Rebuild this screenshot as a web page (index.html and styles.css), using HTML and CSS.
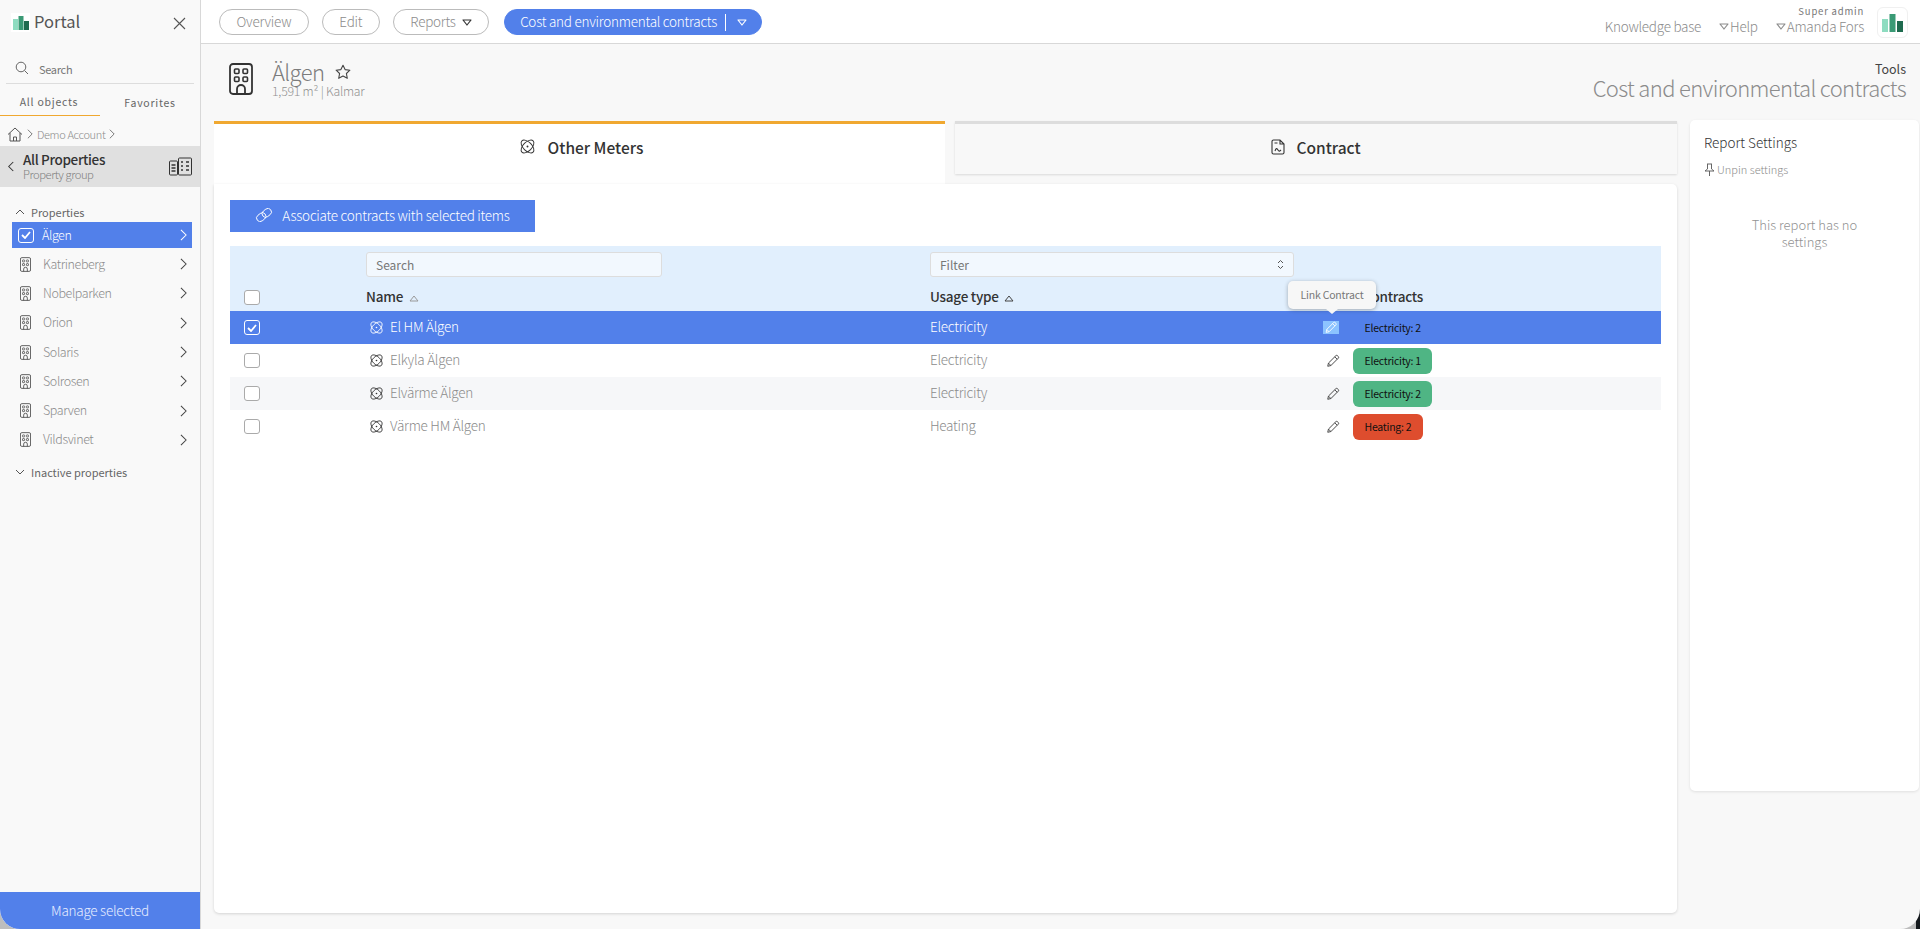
FILE: index.html
```html
<!DOCTYPE html>
<html>
<head>
	<title>Portal</title>
	<meta http-equiv="content-type" content="text/html; charset=utf-8" />
	<link rel="stylesheet" href="styles.css">
</head>
<body>
<svg class="defs" width="0" height="0">
	<symbol id="building" viewBox="0 0 24 32">
		<rect x="1" y="1" width="22" height="30" rx="3" fill="none" stroke="currentColor" stroke-width="1.8"/>
		<rect x="5.5" y="6" width="4.5" height="4.5" rx="1" fill="none" stroke="currentColor" stroke-width="1.6"/>
		<rect x="14" y="6" width="4.5" height="4.5" rx="1" fill="none" stroke="currentColor" stroke-width="1.6"/>
		<rect x="5.5" y="14" width="4.5" height="4.5" rx="1" fill="none" stroke="currentColor" stroke-width="1.6"/>
		<rect x="14" y="14" width="4.5" height="4.5" rx="1" fill="none" stroke="currentColor" stroke-width="1.6"/>
		<path d="M8 31v-5a4 4 0 0 1 8 0v5" fill="none" stroke="currentColor" stroke-width="1.8"/>
	</symbol>
	<symbol id="atom" viewBox="0 0 18 18">
		<g fill="none" stroke="currentColor" stroke-width="1">
			<ellipse cx="9" cy="9" rx="8.4" ry="4.600" transform="rotate(45 9 9)"/>
			<ellipse cx="9" cy="9" rx="8.4" ry="4.600" transform="rotate(-45 9 9)"/>
		</g>
		<circle cx="9" cy="9" r="1" fill="currentColor"/>
	</symbol>
	<symbol id="pencil" viewBox="0 0 16 16">
		<path d="M2 14l.8-3.6L11.2 2a1.4 1.4 0 0 1 2 0l.8.8a1.4 1.4 0 0 1 0 2L5.600 13.200z M10 3.200l2.800 2.800 M2.800 10.400l2.800 2.800" fill="none" stroke="currentColor" stroke-width="1.1"/>
	</symbol>
	<symbol id="chev-right" viewBox="0 0 8 14">
		<path d="M1 1l6 6-6 6" fill="none" stroke="currentColor" stroke-width="1.2"/>
	</symbol>
	<symbol id="tri" viewBox="0 0 10 7">
		<path d="M1 1h8L5 6z" fill="none" stroke="currentColor" stroke-width="1.2" stroke-linejoin="round"/>
	</symbol>
</svg>

<div class="app">
	<aside class="side">
		<div class="brand">
			<span class="brand-logo">
				<svg width="19" height="19" viewBox="0 0 19 19"><rect x="2" y="6" width="5" height="11" fill="#8edcc0"/><rect x="7.500" y="3" width="5" height="14" fill="#3a9a75"/><rect x="13" y="8" width="5" height="9" fill="#1f6b4f"/></svg>
			</span>
			<span class="brand-name">Portal</span>
			<svg class="brand-close" width="13" height="13" viewBox="0 0 13 13"><path d="M1 1l11 11M12 1L1 12" stroke="#555" stroke-width="1.1"/></svg>
		</div>
		<div class="side-search">
			<svg width="14" height="14" viewBox="0 0 14 14"><circle cx="6" cy="6" r="4.800" fill="none" stroke="#666" stroke-width="1"/><path d="M9.500 9.500l3.500 3.500" stroke="#666" stroke-width="1"/></svg>
			<span>Search</span>
		</div>
		<div class="side-tabs">
			<span class="side-tab side-tab-on">All objects</span>
			<span class="side-tab">Favorites</span>
		</div>
		<div class="crumb">
			<svg width="16" height="15" viewBox="0 0 16 15"><path d="M1 7.500L8 1l7 6.500M3 6v8h10V6M6.500 14v-4h3v4" fill="none" stroke="#555" stroke-width="1"/></svg>
			<svg class="crumb-sep" width="6" height="10"><use href="#chev-right"/></svg>
			<span>Demo Account</span>
			<svg class="crumb-sep" width="6" height="10"><use href="#chev-right"/></svg>
		</div>
		<div class="group">
			<svg class="group-back" width="6" height="11" viewBox="0 0 8 14"><path d="M7 1L1 7l6 6" fill="none" stroke="#333" stroke-width="1.400"/></svg>
			<div class="group-text">
				<div class="group-title">All Properties</div>
				<div class="group-sub">Property group</div>
			</div>
			<svg class="group-icon" width="23" height="19" viewBox="0 0 23 19">
				<g fill="none" stroke="#333" stroke-width="1">
					<rect x="0.500" y="4" width="8" height="14" rx="1"/>
					<rect x="9.500" y="1" width="13" height="17" rx="1"/>
					<path d="M12 5h2M17 5h3M12 9h2M17 9h3M12 13h2M17 13h3M2.500 8h4M2.500 11h4M2.500 14h4" stroke-width="1.600"/>
				</g>
			</svg>
		</div>
		<div class="sect"><svg width="10" height="6" viewBox="0 0 10 6"><path d="M1 5l4-4 4 4" fill="none" stroke="#555"/></svg>Properties</div>
		<div class="prop prop-on">
			<span class="check check-big check-on"><svg width="10" height="8" viewBox="0 0 10 8"><path d="M1 4l3 3 5-6" fill="none" stroke="#fff" stroke-width="1.800"/></svg></span>
			<span class="prop-name">Älgen</span>
			<svg class="prop-arrow" width="7" height="12"><use href="#chev-right"/></svg>
		</div>
		<div class="prop"><svg class="prop-icon" width="11" height="15"><use href="#building"/></svg><span class="prop-name">Katrineberg</span><svg class="prop-arrow" width="7" height="12"><use href="#chev-right"/></svg></div>
		<div class="prop"><svg class="prop-icon" width="11" height="15"><use href="#building"/></svg><span class="prop-name">Nobelparken</span><svg class="prop-arrow" width="7" height="12"><use href="#chev-right"/></svg></div>
		<div class="prop"><svg class="prop-icon" width="11" height="15"><use href="#building"/></svg><span class="prop-name">Orion</span><svg class="prop-arrow" width="7" height="12"><use href="#chev-right"/></svg></div>
		<div class="prop"><svg class="prop-icon" width="11" height="15"><use href="#building"/></svg><span class="prop-name">Solaris</span><svg class="prop-arrow" width="7" height="12"><use href="#chev-right"/></svg></div>
		<div class="prop"><svg class="prop-icon" width="11" height="15"><use href="#building"/></svg><span class="prop-name">Solrosen</span><svg class="prop-arrow" width="7" height="12"><use href="#chev-right"/></svg></div>
		<div class="prop"><svg class="prop-icon" width="11" height="15"><use href="#building"/></svg><span class="prop-name">Sparven</span><svg class="prop-arrow" width="7" height="12"><use href="#chev-right"/></svg></div>
		<div class="prop"><svg class="prop-icon" width="11" height="15"><use href="#building"/></svg><span class="prop-name">Vildsvinet</span><svg class="prop-arrow" width="7" height="12"><use href="#chev-right"/></svg></div>
		<div class="sect sect-low"><svg width="10" height="6" viewBox="0 0 10 6"><path d="M1 1l4 4 4-4" fill="none" stroke="#555"/></svg>Inactive properties</div>
		<div class="manage">Manage selected</div>
	</aside>

	<div class="main">
		<header class="top">
			<span class="pill">Overview</span>
			<span class="pill">Edit</span>
			<span class="pill">Reports <svg width="10" height="7"><use href="#tri"/></svg></span>
			<span class="pill pill-on">Cost and environmental contracts<i class="pill-sep"></i><svg width="10" height="7"><use href="#tri"/></svg></span>
			<div class="top-right">
				<a class="top-link">Knowledge base</a>
				<a class="top-link"><svg width="10" height="7"><use href="#tri"/></svg>Help</a>
				<div class="user">
					<div class="user-role">Super admin</div>
					<a class="top-link"><svg width="10" height="7"><use href="#tri"/></svg>Amanda Fors</a>
				</div>
				<span class="top-logo">
					<svg width="22" height="20" viewBox="0 0 22 20"><rect x="0" y="6" width="6" height="13" fill="#8edcc0"/><rect x="7.500" y="1" width="6" height="18" fill="#3a9a75"/><rect x="15" y="8" width="6" height="11" fill="#1f6b4f"/></svg>
				</span>
			</div>
		</header>

		<div class="head">
			<svg class="head-icon" width="24" height="32"><use href="#building"/></svg>
			<div class="head-text">
				<div class="head-title">Älgen
					<svg width="16" height="16" viewBox="0 0 16 16"><path d="M8 1.200l2.100 4.400 4.800.6-3.500 3.300.9 4.800L8 12l-4.300 2.300.9-4.800L1.100 6.200l4.800-.6z" fill="none" stroke="#444" stroke-width="1.100" stroke-linejoin="round"/></svg>
				</div>
				<div class="head-sub">1,591 m² | Kalmar</div>
			</div>
			<div class="head-right">
				<div class="head-tools">Tools</div>
				<div class="head-report">Cost and environmental contracts</div>
			</div>
		</div>

		<div class="body">
			<div class="left">
				<div class="tabs">
					<div class="tab tab-on"><svg width="17" height="17"><use href="#atom"/></svg>Other Meters</div>
					<div class="tab">
						<svg width="14" height="16" viewBox="0 0 14 16"><path d="M1 2.500A1.500 1.500 0 0 1 2.500 1H9l4 4v8.500a1.500 1.500 0 0 1-1.500 1.500h-9A1.500 1.500 0 0 1 1 13.500zM9 1v4h4M3.500 4h3M4 12c1-3 2-3 3-1s2 1 3 0" fill="none" stroke="#333" stroke-width="1.100"/></svg>
						Contract
					</div>
				</div>
				<div class="card">
					<button class="assoc">
						<svg width="18" height="14" viewBox="0 0 18 14"><g fill="none" stroke="#fff" stroke-width="0.900" transform="rotate(-38 9 7)"><rect x="0.500" y="3.500" width="10" height="7" rx="3.500"/><rect x="7.500" y="3.500" width="10" height="7" rx="3.500"/></g></svg>
						Associate contracts with selected items
					</button>
					<table class="grid">
						<colgroup>
							<col class="c-check"><col class="c-name"><col class="c-type"><col class="c-edit"><col>
						</colgroup>
						<thead>
							<tr class="filters">
								<th></th>
								<th><div class="field">Search</div></th>
								<th><div class="field">Filter
									<svg width="7" height="11" viewBox="0 0 7 11"><path d="M1 4l2.500-2.500L6 4M1 7l2.500 2.500L6 7" fill="none" stroke="#555"/></svg>
								</div></th>
								<th></th>
								<th></th>
							</tr>
							<tr class="labels">
								<th><span class="check"></span></th>
								<th>Name <svg class="sort" width="10" height="7" viewBox="0 0 10 7"><path d="M1 6h8L5 1z" fill="none" stroke="#999"/></svg></th>
								<th>Usage type <svg class="sort sort-dark" width="10" height="7" viewBox="0 0 10 7"><path d="M1 6h8L5 1z" fill="none" stroke="#444"/></svg></th>
								<th></th>
								<th class="th-contracts">Contracts</th>
							</tr>
						</thead>
						<tbody>
							<tr class="row-on">
								<td><span class="check check-on"><svg width="10" height="8" viewBox="0 0 10 8"><path d="M1 4l3 3 5-6" fill="none" stroke="#fff" stroke-width="1.800"/></svg></span></td>
								<td class="txt"><div class="meter"><svg width="15" height="15"><use href="#atom"/></svg>El HM Älgen</div></td>
								<td class="txt">Electricity</td>
								<td class="edit"><span class="edit-on">
									<svg width="14" height="14"><use href="#pencil"/></svg></span>
									<div class="tip">Link Contract</div>
								</td>
								<td><span class="badge badge-plain">Electricity: 2</span></td>
							</tr>
							<tr>
								<td><span class="check"></span></td>
								<td class="txt"><div class="meter"><svg width="15" height="15"><use href="#atom"/></svg>Elkyla Älgen</div></td>
								<td class="txt">Electricity</td>
								<td class="edit"><svg width="14" height="14"><use href="#pencil"/></svg></td>
								<td><span class="badge">Electricity: 1</span></td>
							</tr>
							<tr>
								<td><span class="check"></span></td>
								<td class="txt"><div class="meter"><svg width="15" height="15"><use href="#atom"/></svg>Elvärme Älgen</div></td>
								<td class="txt">Electricity</td>
								<td class="edit"><svg width="14" height="14"><use href="#pencil"/></svg></td>
								<td><span class="badge">Electricity: 2</span></td>
							</tr>
							<tr>
								<td><span class="check"></span></td>
								<td class="txt"><div class="meter"><svg width="15" height="15"><use href="#atom"/></svg>Värme HM Älgen</div></td>
								<td class="txt">Heating</td>
								<td class="edit"><svg width="14" height="14"><use href="#pencil"/></svg></td>
								<td><span class="badge badge-red">Heating: 2</span></td>
							</tr>
						</tbody>
					</table>
				</div>
			</div>
			<div class="settings">
				<div class="settings-title">Report Settings</div>
				<div class="settings-pin">
					<svg width="11" height="13" viewBox="0 0 11 13"><path d="M3 1h5M3.500 1v5L1 8h9L7.500 6V1M5.500 8v5" fill="none" stroke="#666" stroke-width="1"/></svg>
					Unpin settings
				</div>
				<div class="settings-empty">This report has no settings</div>
			</div>
		</div>
	</div>
</div>
</body>
</html>
```

FILE: styles.css
```css
html {
	height:100%;
	background:linear-gradient(to right, #bdbdbd 1916px, #14191d 1916px);
}

body {
	margin:0;
	height:100%;
	overflow:hidden;
	font-family:"Noto Sans CJK SC", "Noto Sans", sans-serif;
	font-size:14px;
	color:#333;
}

.defs {
	position:absolute;
}

svg {
	flex:none;
}

.app {
	display:flex;
	height:929px;
	background:#f8f8f8;
	border-radius:0 0 20px 20px;
	overflow:hidden;
}

/* sidebar */
.side {
	width:200px;
	flex:none;
	display:flex;
	flex-direction:column;
	background:#f9f9f9;
	border-right:1px solid #d8d8d8;
}

.brand {
	display:flex;
	align-items:center;
	height:44px;
	padding:0 14px 0 11px;
}

.brand-logo {
	width:19px;
	height:19px;
	background:#fff;
	margin-right:4px;
	margin-top:1px;
}

.brand-name {
	font-size:16.500px;
	font-weight:400;
	color:#555;
	flex:1;
	padding-bottom:2px;
}

.brand-close {
	margin-top:3px;
}

.side-search {
	display:flex;
	align-items:center;
	height:30px;
	margin:9px 6px 0;
	padding:0 0 0 9px;
	border-bottom:1px solid #ddd;
	font-size:11px;
	letter-spacing:-0.300px;
	color:#777;
	gap:10px;
}

.side-search span {
	padding-top:2px;
}

.side-tabs {
	display:flex;
	height:32px;
	letter-spacing:0.750px;
	font-size:10.500px;
	color:#666;
}

.side-tab {
	width:100px;
	text-align:center;
	line-height:38px;
	box-sizing:border-box;
}

.side-tab-on {
	border-bottom:1px solid #f0a830;
	line-height:35px;
	padding-right:2px;
}

.crumb {
	display:flex;
	align-items:center;
	height:30px;
	padding:6px 0 0 7px;
	box-sizing:border-box;
	gap:4px;
	font-size:11px;
	letter-spacing:-0.350px;
	font-weight:300;
	color:#8c8c8c;
}

.crumb-sep {
	color:#666;
}

.group {
	display:flex;
	align-items:center;
	height:41px;
	background:#e0e0e0;
	padding:0 8px;
}

.group-back {
	margin-right:9px;
}

.group-text {
	flex:1;
	padding-bottom:1px;
}

.group-title {
	font-size:13.500px;
	letter-spacing:-0.350px;
	font-weight:500;
	line-height:16px;
	color:#333;
}

.group-sub {
	font-size:11.300px;
	letter-spacing:-0.450px;
	font-weight:300;
	line-height:14px;
	color:#808080;
}

.sect {
	display:flex;
	align-items:center;
	gap:6px;
	height:20px;
	margin-top:15px;
	padding:0 0 1px 15px;
	box-sizing:border-box;
	font-size:11px;
	color:#666;
}

.sect-low {
	margin-top:8px;
}

.prop {
	display:flex;
	align-items:center;
	height:29.300px;
	margin:0 8px 0 12px;
	padding:0 5px 0 7px;
	font-size:12.500px;
	letter-spacing:-0.400px;
	font-weight:300;
	color:#8c8c8c;
}

.prop-icon {
	margin:0 12px 0 1px;
	color:#444;
}

.prop-name {
	flex:1;
	padding-bottom:2px;
}

.prop-arrow {
	color:#444;
}

.prop-on {
	height:26px;
	margin-bottom:1.500px;
	padding-left:6px;
	background:#5280ea;
	color:#fff;
}

.prop-on .prop-arrow {
	color:#fff;
}

.check {
	display:flex;
	align-items:center;
	justify-content:center;
	box-sizing:border-box;
	width:16px;
	height:15px;
	border:1px solid #aaa;
	border-radius:3px;
	background:#fff;
}

.check-on {
	background:transparent;
	border-color:#fff;
}

.check-big {
	margin-right:8px;
}

.manage {
	margin-top:auto;
	height:37px;
	line-height:36px;
	text-align:center;
	font-size:13.500px;
	letter-spacing:-0.250px;
	font-weight:300;
	background:#5280ea;
	color:#e6edff;
}

/* main column */
.main {
	flex:1;
	min-width:0;
	display:flex;
	flex-direction:column;
}

.top {
	display:flex;
	align-items:center;
	flex:none;
	height:44px;
	box-sizing:border-box;
	padding:1px 12px 0 18px;
	background:#fff;
	border-bottom:1px solid #d8d8d8;
	gap:13px;
}

.pill {
	display:inline-flex;
	align-items:center;
	gap:6px;
	height:26px;
	padding:0 16.500px 2px;
	box-sizing:border-box;
	border:1px solid #bbb;
	border-radius:13px;
	font-size:13.500px;
	letter-spacing:-0.250px;
	font-weight:300;
	color:#8c8c8c;
}

.pill svg {
	margin-top:2px;
	color:#333;
}

.pill-on {
	background:#5280ea;
	border-color:#5280ea;
	color:#fff;
	margin-left:2px;
	padding:0 14px 2px 15px;
}

.pill-on svg {
	color:#fff;
}

.pill-sep {
	width:1px;
	height:17px;
	background:#fff;
	margin:2px 5px 0 2px;
}

.top-right {
	margin-left:auto;
	display:flex;
	align-items:flex-end;
	color:#8c8c8c;
	font-size:13.500px;
	letter-spacing:-0.250px;
	font-weight:300;
	line-height:17px;
}

.top-link {
	display:inline-flex;
	align-items:center;
	gap:1px;
	color:#8c8c8c;
}

.top-right > .top-link {
	margin-right:18px;
	margin-bottom:3px;
}

.user {
	text-align:right;
	margin-bottom:3px;
	line-height:17px;
}

.user-role {
	font-size:9.500px;
	font-weight:400;
	letter-spacing:0.800px;
	color:#777;
	line-height:10px;
}

.top-logo {
	display:flex;
	align-items:center;
	justify-content:center;
	width:31px;
	height:31px;
	margin-left:13px;
	border:1px solid #f0f0f0;
	border-radius:6px;
	box-sizing:border-box;
}

.head {
	display:flex;
	flex:none;
	height:77px;
	padding:18px 14px 0 28px;
	box-sizing:border-box;
}

.head-icon {
	color:#333;
	margin-top:1px;
}

.head-text {
	margin:-4px 0 0 19px;
}

.head-title {
	display:flex;
	align-items:center;
	gap:11px;
	font-size:22px;
	letter-spacing:-0.600px;
	font-weight:300;
	line-height:26px;
	color:#7c7c7c;
}

.head-title svg {
	margin-top:2px;
}

.head-sub {
	font-size:12.300px;
	letter-spacing:-0.250px;
	font-weight:300;
	line-height:15px;
	color:#929292;
}

.head-right {
	margin-left:auto;
	text-align:right;
}

.head-tools {
	font-size:12.500px;
	line-height:14px;
	color:#444;
}

.head-report {
	font-size:22px;
	letter-spacing:-0.640px;
	font-weight:300;
	line-height:22px;
	color:#8c8c8c;
}

.body {
	display:flex;
	flex:1;
	min-height:0;
	padding-left:13px;
}

.left {
	width:1463px;
	height:792px;
	display:flex;
	flex-direction:column;
	flex:none;
}

.tabs {
	display:flex;
	gap:10px;
	flex:none;
	height:63px;
	align-items:flex-start;
}

.tab {
	flex:1;
	display:flex;
	align-items:center;
	justify-content:center;
	gap:11px;
	height:53px;
	padding-bottom:5px;
	box-sizing:border-box;
	border-top:3px solid #ddd;
	background:#f8f8f8;
	box-shadow:0 1px 2px rgba(0,0,0,0.12);
	font-size:15.500px;
	font-weight:500;
	color:#333;
}

.tab-on {
	flex:none;
	width:731px;
	height:63px;
	background:#fff;
	border-top-color:#f0a830;
	box-shadow:none;
	padding:0 0 15px 3px;
	gap:12px;
}

.card {
	flex:1;
	background:#fff;
	border-radius:0 5px 5px 5px;
	box-shadow:0 1px 3px rgba(0,0,0,0.15);
	padding:16px;
}

.assoc {
	display:flex;
	align-items:center;
	justify-content:center;
	gap:9px;
	width:305px;
	height:32px;
	padding:0 0 2px;
	border:0;
	background:#5280ea;
	color:#fff;
	font-family:inherit;
	font-size:13.500px;
	letter-spacing:-0.250px;
	font-weight:300;
}

.grid {
	width:100%;
	table-layout:fixed;
	border-collapse:collapse;
	margin-top:14px;
}

.c-check { width:136px; }
.c-name { width:564px; }
.c-type { width:390px; }
.c-edit { width:33px; }

.grid thead {
	background:#e1effd;
}

.grid th {
	text-align:left;
	padding:0;
	font-weight:500;
	font-size:13.500px;
	letter-spacing:-0.250px;
	color:#333;
}

.grid th:first-child, .grid td:first-child {
	padding-left:14px;
}

.filters th {
	height:38px;
	vertical-align:bottom;
}

.labels th {
	height:27px;
	vertical-align:middle;
	padding-bottom:4px;
	box-sizing:border-box;
}

.labels th:first-child {
	padding-bottom:0;
}

.grid .th-contracts {
	padding-left:10px;
}

.field {
	display:flex;
	align-items:center;
	justify-content:space-between;
	height:25px;
	margin-bottom:7px;
	padding:0 9px 1px;
	box-sizing:border-box;
	background:#f2f8fe;
	border:1px solid #ddd;
	border-radius:3px;
	font-size:12px;
	font-weight:400;
	letter-spacing:0;
	color:#777;
}

.filters th:nth-child(2) .field {
	width:296px;
}

.filters th:nth-child(3) .field {
	width:364px;
}

.sort {
	margin-left:3px;
}

.grid td {
	height:33px;
	padding:0;
	box-sizing:border-box;
	font-size:13.500px;
	letter-spacing:-0.250px;
	font-weight:300;
	color:#8c8c8c;
}

.grid .txt {
	padding-bottom:3px;
}

.grid tbody tr:nth-child(3) {
	background:#f6f7f9;
}

.grid tbody .row-on {
	background:#5280ea;
}

.grid .row-on td {
	color:#fff;
}

.meter {
	display:flex;
	align-items:center;
	gap:6px;
	padding-left:3px;
}

.meter svg {
	color:#333;
	margin-top:2px;
}

.row-on .meter svg {
	color:#fff;
}

.grid .edit {
	position:relative;
	color:#444;
}

.edit svg {
	display:block;
	margin-left:6px;
}

.edit-on {
	display:block;
	width:16px;
	height:13px;
	margin-left:3px;
	background:#8cc3ff;
	color:#fff;
}

.edit-on svg {
	margin:0 0 0 1px;
	height:13px;
}

.tip {
	position:absolute;
	left:-32px;
	top:-30px;
	width:88px;
	height:28px;
	line-height:27px;
	text-align:center;
	background:#f7f7f7;
	border-radius:5px;
	box-shadow:0 1px 4px rgba(0,0,0,0.3);
	font-size:10.500px;
	letter-spacing:-0.200px;
	font-weight:400;
	color:#777;
}

.tip:after {
	content:"";
	position:absolute;
	left:38px;
	bottom:-5px;
	border-left:6px solid transparent;
	border-right:6px solid transparent;
	border-top:5px solid #f7f7f7;
}

.badge {
	display:inline-block;
	height:26px;
	line-height:25px;
	padding:0 11.500px;
	border-radius:6px;
	background:#4fb584;
	font-size:10.500px;
	letter-spacing:-0.250px;
	font-weight:400;
	color:#111;
	vertical-align:middle;
}

.badge-red {
	background:#de4d2e;
}

.badge-plain {
	background:transparent;
}

.grid .row-on .badge {
	color:#111;
}

/* right panel */
.settings {
	width:229px;
	height:671px;
	margin:-1px 0 0 13px;
	padding:13px 14px;
	box-sizing:border-box;
	background:#fff;
	border-radius:5px;
	box-shadow:0 1px 3px rgba(0,0,0,0.1);
}

.settings-title {
	font-size:13.500px;
	font-weight:300;
	line-height:18px;
	color:#333;
}

.settings-pin {
	display:flex;
	align-items:center;
	gap:2px;
	margin-top:10px;
	font-size:11px;
	font-weight:300;
	color:#8c8c8c;
}

.settings-empty {
	width:130px;
	margin:39px auto 0;
	text-align:center;
	font-size:13px;
	font-weight:300;
	line-height:17px;
	color:#929292;
}
```
